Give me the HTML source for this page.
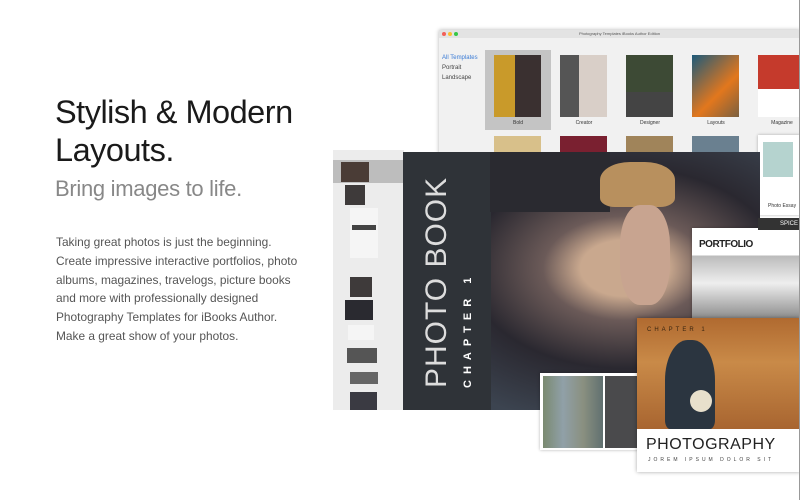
<!DOCTYPE html>
<html><head><meta charset="utf-8"><style>
*{margin:0;padding:0;box-sizing:border-box}
body{width:800px;height:500px;background:#fff;position:relative;overflow:hidden;font-family:"Liberation Sans",sans-serif}
.a{position:absolute}
h1{position:absolute;left:55px;top:93px;font-size:32.5px;line-height:38px;font-weight:normal;color:#1a1a1a;letter-spacing:-0.5px}
h2{position:absolute;left:55px;top:176px;font-size:22px;font-weight:normal;color:#888;letter-spacing:-0.3px}
p{position:absolute;left:56px;top:233px;width:250px;font-size:11.9px;line-height:18.8px;color:#555}
.th{position:absolute;top:55px;width:47px;height:62px}
.lb{position:absolute;top:120px;width:66px;text-align:center;font-size:5px;color:#333}
.v{position:absolute;writing-mode:vertical-rl;transform:rotate(180deg);white-space:nowrap;color:#fff}
</style></head><body>
<h1>Stylish &amp; Modern<br>Layouts.</h1>
<h2>Bring images to life.</h2>
<p>Taking great photos is just the beginning. Create impressive interactive portfolios, photo albums, magazines, travelogs, picture books and more with professionally designed Photography Templates for iBooks Author. Make a great show of your photos.</p>

<div class="a" style="left:439px;top:30px;width:361px;height:125px;background:#f1f1f1;box-shadow:0 0 4px rgba(0,0,0,.3)"></div>
<div class="a" style="left:439px;top:30px;width:361px;height:8px;background:#e3e3e3;font-size:4px;color:#555;text-align:center;line-height:8px">Photography Templates iBooks Author Edition</div>
<div class="a" style="left:442px;top:32px;width:4px;height:4px;border-radius:50%;background:#f25f58"></div>
<div class="a" style="left:448px;top:32px;width:4px;height:4px;border-radius:50%;background:#fbbe2f"></div>
<div class="a" style="left:454px;top:32px;width:4px;height:4px;border-radius:50%;background:#37c748"></div>
<div class="a" style="left:442px;top:53px;font-size:6px;color:#3a7bd5;line-height:10px">All Templates</div>
<div class="a" style="left:442px;top:63px;font-size:6px;color:#444;line-height:10px">Portrait<br>Landscape</div>
<div class="a" style="left:485px;top:50px;width:66px;height:80px;background:#c4c4c4"></div>
<div class="th" style="left:494px;background:linear-gradient(90deg,#c99a2a 0 45%,#3a3030 45%)"></div>
<div class="th" style="left:560px;background:linear-gradient(90deg,#555 0 40%,#d9cfc8 40%)"></div>
<div class="th" style="left:626px;background:linear-gradient(#3d4a35 0 60%,#444 60%)"></div>
<div class="th" style="left:692px;background:linear-gradient(135deg,#1d5a7a,#e2771d 60%,#7a6040)"></div>
<div class="th" style="left:758px;background:linear-gradient(#c53a2c 0 55%,#fff 55%)"></div>
<div class="lb" style="left:485px">Bold</div><div class="lb" style="left:551px">Creator</div><div class="lb" style="left:617px">Designer</div><div class="lb" style="left:683px">Layouts</div><div class="lb" style="left:749px">Magazine</div>
<div class="a" style="left:494px;top:136px;width:47px;height:16px;background:#d8c08a"></div>
<div class="a" style="left:560px;top:136px;width:47px;height:16px;background:#7a2030"></div>
<div class="a" style="left:626px;top:136px;width:47px;height:16px;background:#a0845a"></div>
<div class="a" style="left:692px;top:136px;width:47px;height:16px;background:#6a8090"></div>
<div class="a" style="left:758px;top:135px;width:42px;height:80px;background:#fff;box-shadow:0 0 3px rgba(0,0,0,.3)"></div>
<div class="a" style="left:763px;top:142px;width:30px;height:35px;background:#b5d3cf"></div>
<div class="a" style="left:768px;top:203px;font-size:5px;color:#333">Photo Essay</div>

<div class="a" style="left:333px;top:150px;width:71px;height:260px;background:#ececec"></div>
<div class="a" style="left:333px;top:160px;width:71px;height:23px;background:#bdbdbd"></div>
<div class="a" style="left:341px;top:162px;width:28px;height:20px;background:#4a3c36"></div>
<div class="a" style="left:345px;top:185px;width:20px;height:20px;background:#3e3a3a"></div>
<div class="a" style="left:350px;top:208px;width:28px;height:50px;background:#f5f5f5"></div>
<div class="a" style="left:352px;top:225px;width:24px;height:5px;background:#444"></div>
<div class="a" style="left:350px;top:277px;width:22px;height:20px;background:#3e3a3a"></div>
<div class="a" style="left:345px;top:300px;width:28px;height:20px;background:#2a2a30"></div>
<div class="a" style="left:348px;top:325px;width:26px;height:15px;background:#f5f5f5"></div>
<div class="a" style="left:347px;top:348px;width:30px;height:15px;background:#555"></div>
<div class="a" style="left:350px;top:372px;width:28px;height:12px;background:#666"></div>
<div class="a" style="left:350px;top:392px;width:27px;height:18px;background:#3a3a42"></div>

<div class="a" style="left:403px;top:152px;width:357px;height:258px;background:radial-gradient(ellipse at 62% 45%,#c9a88e 0 14%,#6b5a58 26%,#2a2830 50%,#3c4450 80%)"></div>
<div class="a" style="left:403px;top:152px;width:88px;height:258px;background:#2f3338"></div>
<div class="a" style="left:490px;top:152px;width:120px;height:60px;background:#2a2a30"></div>
<div class="a" style="left:600px;top:162px;width:75px;height:45px;background:#b8905e;border-radius:40% 40% 20% 20%"></div>
<div class="a" style="left:620px;top:205px;width:50px;height:100px;background:#c8a490;border-radius:40%"></div>
<div class="v" style="left:420px;top:176px;height:212px;font-size:30px;line-height:33px;letter-spacing:1px;font-weight:normal;color:#ddd">PHOTO BOOK</div>
<div class="v" style="left:461px;top:283px;height:105px;font-size:11px;line-height:14px;letter-spacing:6px;font-weight:bold">CHAPTER 1</div>

<div class="a" style="left:692px;top:228px;width:108px;height:92px;background:linear-gradient(#fff 0 30%,#bbb 30%,#eee 60%,#888);box-shadow:0 0 3px rgba(0,0,0,.3)"></div>
<div class="a" style="left:699px;top:239px;font-size:10px;font-weight:bold;color:#222;letter-spacing:-0.5px">PORTFOLIO</div>
<div class="a" style="left:758px;top:218px;width:42px;height:12px;background:#333;color:#fff;font-size:6px;text-align:right;line-height:12px;padding-right:2px">SPICE</div>

<div class="a" style="left:540px;top:373px;width:100px;height:77px;background:#fff;box-shadow:0 0 3px rgba(0,0,0,.3)"></div>
<div class="a" style="left:543px;top:376px;width:60px;height:72px;background:linear-gradient(90deg,#7a8a70,#90a0a8,#8a9080,#607070)"></div>
<div class="a" style="left:605px;top:376px;width:35px;height:72px;background:#4a4a4c"></div>

<div class="a" style="left:637px;top:318px;width:163px;height:154px;background:#fff;box-shadow:0 0 4px rgba(0,0,0,.35)"></div>
<div class="a" style="left:637px;top:318px;width:163px;height:111px;background:linear-gradient(#b06a30,#c98a48 40%,#a86530)"></div>
<div class="a" style="left:665px;top:340px;width:50px;height:89px;background:#2b3540;border-radius:45% 45% 10% 10%"></div>
<div class="a" style="left:690px;top:390px;width:22px;height:22px;border-radius:50%;background:#e8e0cc"></div>
<div class="a" style="left:647px;top:327px;font-size:6px;color:#3a2510;letter-spacing:3px">CHAPTER 1</div>
<div class="a" style="left:646px;top:436px;font-size:16px;color:#222;letter-spacing:0.5px">PHOTOGRAPHY</div>
<div class="a" style="left:648px;top:457px;font-size:5px;color:#444;letter-spacing:3px">JOREM IPSUM DOLOR SIT</div>

<div class="a" style="left:799px;top:0;width:1px;height:500px;background:#999"></div>
</body></html>
